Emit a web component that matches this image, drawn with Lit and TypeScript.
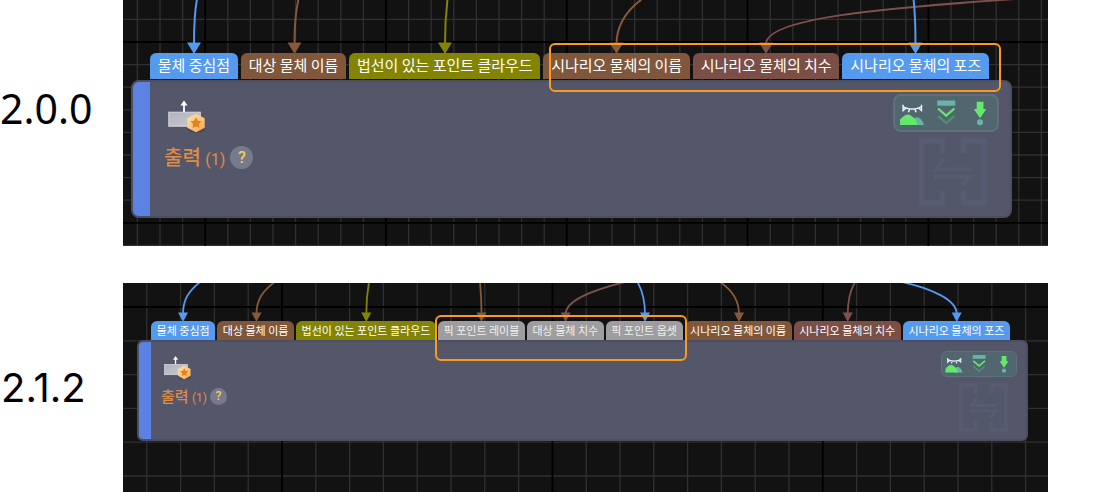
import { LitElement, html, svg, css } from "lit";
import { customElement, property } from "lit/decorators.js";
import { classMap } from "lit/directives/class-map.js";

interface Port {
  label: string;
  tone: "blue" | "brown" | "olive" | "red" | "gray";
}

interface Edge {
  color: string;
  path: string;
  x: number;
}

interface Graph {
  version: string;
  compact: boolean;
  grid: { step: number; x: number; y: number };
  arrow: { top: number; half: number; tip: number };
  ports: Port[];
  edges: Edge[];
  mark: { left: number; top: number; width: number; height: number };
}

const BLUE = "#549aee";
const BROWN = "#85593b";
const OLIVE = "#848404";
const RED = "#80504a";

const GRAPHS: Graph[] = [
  {
    version: "2.0.0",
    compact: false,
    grid: { step: 22.6, x: 82.2, y: 42 },
    arrow: { top: 42.5, half: 7, tip: 54 },
    ports: [
      { label: "물체 중심점", tone: "blue" },
      { label: "대상 물체 이름", tone: "brown" },
      { label: "법선이 있는 포인트 클라우드", tone: "olive" },
      { label: "시나리오 물체의 이름", tone: "brown" },
      { label: "시나리오 물체의 치수", tone: "red" },
      { label: "시나리오 물체의 포즈", tone: "blue" },
    ],
    edges: [
      { color: BLUE, x: 71, path: "M74 -1 C72 10 71 25 71 44" },
      { color: BROWN, x: 171.5, path: "M175.500 -1 C172.500 12 171.500 25 171.500 44" },
      { color: OLIVE, x: 322, path: "M324.500 -1 C323 12 322 25 322 44" },
      { color: BROWN, x: 493.5, path: "M519 -1 C503 11 493.500 25 493.500 44" },
      { color: RED, x: 643, path: "M892 -1 C760 8 643 18 643 44" },
      { color: BLUE, x: 792.5, path: "M790.500 -1 C792 12 792.500 25 792.500 44" },
    ],
    mark: { left: 426, top: 43, width: 452, height: 49 },
  },
  {
    version: "2.1.2",
    compact: true,
    grid: { step: 33.8, x: 159, y: 24 },
    arrow: { top: 29.5, half: 5, tip: 39 },
    ports: [
      { label: "물체 중심점", tone: "blue" },
      { label: "대상 물체 이름", tone: "brown" },
      { label: "법선이 있는 포인트 클라우드", tone: "olive" },
      { label: "픽 포인트 레이블", tone: "gray" },
      { label: "대상 물체 치수", tone: "gray" },
      { label: "픽 포인트 옵셋", tone: "gray" },
      { label: "시나리오 물체의 이름", tone: "brown" },
      { label: "시나리오 물체의 치수", tone: "red" },
      { label: "시나리오 물체의 포즈", tone: "blue" },
    ],
    edges: [
      { color: BLUE, x: 60, path: "M77 -1 C66 8 60 16 60 31" },
      { color: BROWN, x: 133.5, path: "M151.500 -1 C140 8 133.500 16 133.500 31" },
      { color: OLIVE, x: 243.3, path: "M246 -1 C244 10 243.300 18 243.300 31" },
      { color: BROWN, x: 358.5, path: "M357 -1 C358 10 358.500 18 358.500 31" },
      { color: RED, x: 442.7, path: "M502 -1 C466 8 442.700 18 442.700 31" },
      { color: BLUE, x: 522, path: "M514.500 -1 C519 7 522 17 522 31" },
      { color: BROWN, x: 616, path: "M597 -1 C609 7 616 18 616 31" },
      { color: RED, x: 724.7, path: "M732 -1 C727 8 724.700 18 724.700 31" },
      { color: BLUE, x: 833.7, path: "M779 -1 C810 6 833.700 17 833.700 31" },
    ],
    mark: { left: 312, top: 32, width: 252, height: 46 },
  },
];

@customElement("graph-tool")
export class GraphTool extends LitElement {
  @property() icon = "";
  @property() label = "";

  static styles = css`
    :host {
      display: block;
    }
    .tool {
      display: block;
      padding: 0;
      border: 0;
      background: none;
      cursor: pointer;
    }
    .glyph {
      display: block;
      width: var(--tool-size);
      height: var(--tool-size);
    }
  `;

  private shape() {
    switch (this.icon) {
      case "hide":
        return svg`
          <path d="M14 26C15.500 20.500 17 18.300 19 18.300C22.500 18.300 24.500 22 26 26Z" fill="#68b5a0"/>
          <path d="M2 26V20.500C4 18.500 7 15.500 9.700 15.500C12.500 15.500 14 17.500 16 18.800C18 20.200 18.500 23 19.500 26Z" fill="#63e86b"/>
          <path d="M4.500 7C9 11 19.500 11 24 7M5 5.700L5.200 11.500L8 9M11.500 10L10.500 13.300M17 10L18 13.300M23.500 5.700L23.400 11.500L20.500 9" fill="none" stroke="#e6eff6" stroke-width="1.500"/>`;
      case "collapse":
        return svg`
          <rect x="5.200" y="1.500" width="18" height="5.200" fill="#68b5a8"/>
          <path d="M6 9.500L14.200 16.700L22.400 9.500" fill="none" stroke="#63e86b" stroke-width="2.300"/>
          <path d="M6 16.800L14.200 24L22.400 16.800" fill="none" stroke="#578c76" stroke-width="2.300"/>`;
      default:
        return svg`
          <path d="M10.700 2.700H17.500V10H20.300L14.100 19.300L7.800 10H10.700Z" fill="#63e86b"/>
          <circle cx="14" cy="23.300" r="3" fill="#68b5a8"/>`;
    }
  }

  render() {
    return html`<button class="tool" type="button" aria-label=${this.label}>
      <svg class="glyph" viewBox="0 0 28 28" aria-hidden="true">${this.shape()}</svg>
    </button>`;
  }
}

@customElement("graph-node")
export class GraphNode extends LitElement {
  static styles = css`
    :host {
      display: block;
    }
    .node {
      display: flex;
      box-sizing: border-box;
      min-height: var(--node-height);
      border: 2px solid #4c4e61;
      border-radius: var(--node-radius);
      background: #54576a;
      overflow: hidden;
    }
    .bar {
      width: var(--bar-width);
      background: #5c83e3;
      border-radius: 4px 0 0 4px;
    }
    .body {
      flex: 1;
      padding: var(--body-top) var(--body-left);
    }
    .picture {
      display: block;
      width: var(--picture-width);
      height: var(--picture-height);
    }
    .title {
      display: flex;
      align-items: center;
      gap: var(--title-gap);
      margin-top: var(--title-top);
      height: var(--help-size);
      color: #e28b45;
    }
    .name {
      margin: 0;
      font-size: var(--title-size);
      font-weight: 500;
      line-height: var(--help-size);
    }
    .count {
      font-family: Roboto, sans-serif;
      font-size: var(--count-size);
      font-weight: 400;
    }
    .help {
      width: var(--help-size);
      height: var(--help-size);
      padding: 0;
      border: 0;
      border-radius: 50%;
      background: #777a8a;
      color: #f2cf52;
      font: 500 var(--help-font) / var(--help-size) Roboto, sans-serif;
      cursor: pointer;
    }
    .side {
      display: flex;
      flex-direction: column;
      align-items: flex-end;
      gap: var(--side-gap);
      padding: var(--side-top) var(--side-right) 0 0;
    }
    .tools {
      display: flex;
      gap: var(--tool-gap);
      padding: var(--tool-pad);
      border: var(--tool-border) solid #5f717b;
      border-radius: var(--node-radius);
      background: #52666f;
    }
    .stamp {
      display: block;
      width: var(--stamp-size);
      height: var(--stamp-size);
      margin-right: var(--stamp-right);
    }
  `;

  render() {
    return html`
      <article class="node">
        <div class="bar"></div>
        <div class="body">
          <svg class="picture" viewBox="0 0 44 38" aria-hidden="true">
            <defs>
              <linearGradient id="plate" x2="1" y2="1">
                <stop offset="0" stop-color="#b2b2ba" />
                <stop offset="1" stop-color="#cacad2" />
              </linearGradient>
              <linearGradient id="badge" x2="1" y2="1">
                <stop offset="0" stop-color="#ffe3ae" />
                <stop offset="1" stop-color="#f8a94f" />
              </linearGradient>
            </defs>
            <path d="M22 30H41V33L36 35H26Z" fill="#454655" opacity=".6" />
            <rect x="4.800" y="14.200" width="31.500" height="14" fill="url(#plate)" stroke="#d9d9e0" />
            <path d="M20 14V6" stroke="#fff" stroke-width="1.800" />
            <path d="M20 2.500L23.500 7.500H16.500Z" fill="#fff" />
            <path d="M32 15.700L40.700 20.300V29.700L32 34.300L23.300 29.700V20.300Z" fill="url(#badge)" />
            <path
              d="M32 19.200L33.800 22.700L37.700 23.300L34.900 26.100L35.500 30L32 28.200L28.500 30L29.100 26.100L26.300 23.300L30.200 22.700Z"
              fill="#e0821f"
            />
          </svg>
          <div class="title">
            <h2 class="name">출력 <span class="count">(1)</span></h2>
            <button class="help" type="button">?</button>
          </div>
        </div>
        <div class="side">
          <div class="tools">
            <graph-tool icon="hide" label="숨기기"></graph-tool>
            <graph-tool icon="collapse" label="접기"></graph-tool>
            <graph-tool icon="run" label="실행"></graph-tool>
          </div>
          <svg class="stamp" viewBox="0 0 68 68" aria-hidden="true">
            <g fill="none" stroke="#565d72">
              <path
                d="M23.200 15V2.700H2.700V65H23.200V53M44.500 15V2.700H65V65H44.500V53"
                stroke-width="5.400"
              />
              <path
                d="M52.700 31.300H17.500L25 20.500M15 38.700H51.500L43 47.500"
                stroke-width="4"
              />
            </g>
          </svg>
        </div>
      </article>
    `;
  }
}

@customElement("graph-canvas")
export class GraphCanvas extends LitElement {
  @property({ attribute: false }) graph!: Graph;

  static styles = css`
    :host {
      display: block;
    }
    .canvas {
      --node-height: 138px;
      --node-radius: 8px;
      --bar-width: 17px;
      --body-top: 16px;
      --body-left: 14px;
      --picture-width: 44px;
      --picture-height: 38px;
      --title-top: 10px;
      --title-gap: 5px;
      --title-size: 20px;
      --count-size: 16px;
      --help-size: 23px;
      --help-font: 16px;
      --side-top: 12px;
      --side-right: 11px;
      --side-gap: 6px;
      --tool-size: 28px;
      --tool-gap: 6px;
      --tool-pad: 3px;
      --tool-border: 2px;
      --stamp-size: 68px;
      --stamp-right: 12px;
      --port-height: 26px;
      --port-line: 24px;
      --port-size: 15px;
      --port-pad: 7px;
      --port-gap: 3px;
      position: relative;
      padding: 53px 36px 28px 8px;
      background: #121212;
      overflow: hidden;
    }
    .compact {
      --node-height: 101px;
      --node-radius: 6px;
      --bar-width: 12px;
      --body-top: 12px;
      --body-left: 10px;
      --picture-width: 32px;
      --picture-height: 28px;
      --title-top: 6px;
      --title-gap: 3px;
      --title-size: 15px;
      --count-size: 12px;
      --help-size: 17px;
      --help-font: 12px;
      --side-top: 9px;
      --side-right: 9px;
      --side-gap: 6px;
      --tool-size: 20px;
      --tool-gap: 5px;
      --tool-pad: 2px;
      --tool-border: 1px;
      --stamp-size: 49px;
      --stamp-right: 9px;
      --port-height: 19px;
      --port-line: 18px;
      --port-size: 11px;
      --port-pad: 5px;
      --port-gap: 2px;
      padding: 38px 20px 51px 14px;
    }
    .backdrop {
      position: absolute;
      inset: 0;
      width: 100%;
      height: 100%;
    }
    .ports {
      position: relative;
      display: flex;
      gap: var(--port-gap);
      margin: 0 23px 1px 19px;
      padding: 0;
      list-style: none;
    }
    .compact .ports {
      margin: 0 18px 0 14px;
    }
    .port {
      flex: 1 1 auto;
      padding: 0 var(--port-pad);
      height: var(--port-height);
      border-radius: 6px 6px 0 0;
      color: #fff;
      font-size: var(--port-size);
      line-height: var(--port-line);
      text-align: center;
      white-space: nowrap;
    }
    .blue {
      background: #549aee;
    }
    .brown {
      background: #80573b;
    }
    .olive {
      background: #848404;
    }
    .red {
      background: #7c4f46;
    }
    .gray {
      background: #9d9da2;
      color: #f0f0ea;
    }
    .node {
      position: relative;
    }
    .mark {
      position: absolute;
      box-sizing: border-box;
      border: 2px solid #fb9a1c;
      border-radius: 6px;
      pointer-events: none;
    }
  `;

  private gridLines() {
    const { step, x, y } = this.graph.grid;
    const lines = [];
    for (let i = -8; i < 80; i++) {
      if (i % 8 === 0) continue;
      const cx = x + i * step;
      const cy = y + i * step;
      lines.push(svg`
        <line x1=${cx} x2=${cx} y1="0" y2="100%" stroke="#303030" stroke-width="1.300"/>
        <line y1=${cy} y2=${cy} x1="0" x2="100%" stroke="#303030" stroke-width="1.300"/>`);
    }
    for (let i = -8; i < 80; i += 8) {
      const cx = x + i * step;
      const cy = y + i * step;
      lines.push(svg`
        <line x1=${cx} x2=${cx} y1="0" y2="100%" stroke="#000" stroke-width="1.800"/>
        <line y1=${cy} y2=${cy} x1="0" x2="100%" stroke="#000" stroke-width="1.800"/>`);
    }
    return lines;
  }

  render() {
    const { arrow, edges, ports, mark, compact } = this.graph;
    return html`
      <div class=${classMap({ canvas: true, compact })}>
        <svg class="backdrop" aria-hidden="true">
          ${this.gridLines()}
          ${edges.map(
            (e) => svg`
              <path d=${e.path} fill="none" stroke=${e.color} stroke-width=${compact ? 1.8 : 2}/>
              <path d="M${e.x - arrow.half} ${arrow.top}H${e.x + arrow.half}L${e.x} ${arrow.tip}Z" fill=${e.color}/>`
          )}
        </svg>
        <ul class="ports">
          ${ports.map((p) => html`<li class="port ${p.tone}">${p.label}</li>`)}
        </ul>
        <graph-node class="node"></graph-node>
        <div
          class="mark"
          style="left:${mark.left}px;top:${mark.top}px;width:${mark.width}px;height:${mark.height}px"
        ></div>
      </div>
    `;
  }
}

@customElement("app-root")
export class AppRoot extends LitElement {
  static styles = css`
    :host {
      display: block;
      background: #fff;
      font-family: "Noto Sans CJK KR", sans-serif;
    }
    .page {
      display: grid;
      gap: 37px;
      padding-right: 52px;
    }
    .row {
      display: grid;
      grid-template-columns: 123px minmax(0, 1fr);
    }
    .version {
      margin: 0;
      padding-top: 88px;
      color: #000;
      font: 400 41px/40px "Noto Sans", sans-serif;
    }
    .newer {
      padding: 85px 0 0 1px;
      font: 400 40px/40px Inter, sans-serif;
    }
  `;

  render() {
    return html`
      <main class="page">
        ${GRAPHS.map(
          (g) => html`
            <section class="row">
              <h1 class=${classMap({ version: true, newer: g.compact })}>${g.version}</h1>
              <graph-canvas .graph=${g}></graph-canvas>
            </section>
          `
        )}
      </main>
    `;
  }
}
